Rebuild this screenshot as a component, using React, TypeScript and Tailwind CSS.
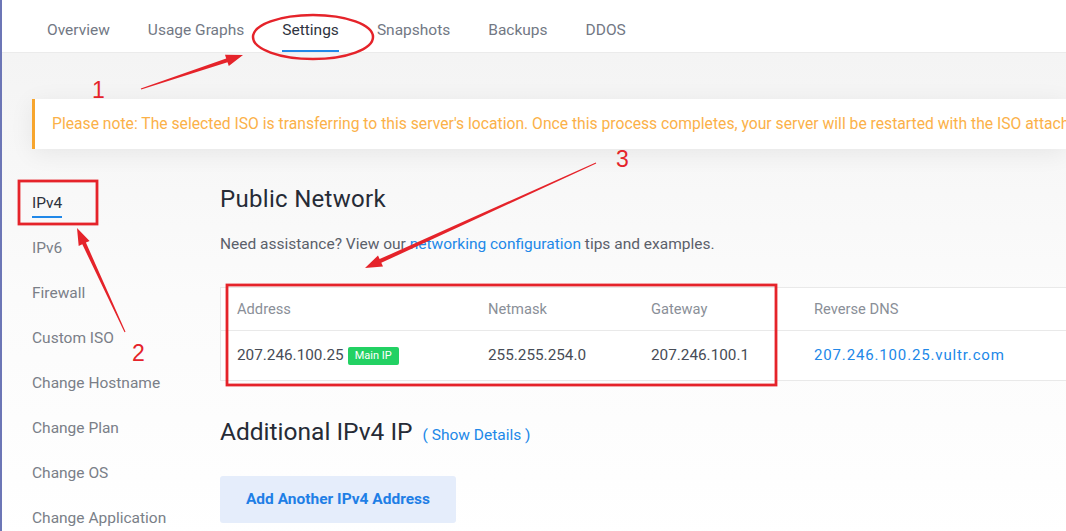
import React from "react";

type P = [number, number];

function arrowPoints(tail: P, tip: P, head = 17, hw = 6, w0 = 0.6, w1 = 2): string {
  const dx = tip[0] - tail[0];
  const dy = tip[1] - tail[1];
  const len = Math.hypot(dx, dy);
  const ux = dx / len;
  const uy = dy / len;
  const nx = -uy;
  const ny = ux;
  const bx = tip[0] - head * ux;
  const by = tip[1] - head * uy;
  const pts: P[] = [
    [tail[0] + w0 * nx, tail[1] + w0 * ny],
    [bx + w1 * nx, by + w1 * ny],
    [bx + hw * nx, by + hw * ny],
    tip,
    [bx - hw * nx, by - hw * ny],
    [bx - w1 * nx, by - w1 * ny],
    [tail[0] - w0 * nx, tail[1] - w0 * ny],
  ];
  return pts.map((p) => `${p[0].toFixed(1)},${p[1].toFixed(1)}`).join(" ");
}

const tabs = ["Overview", "Usage Graphs", "Settings", "Snapshots", "Backups", "DDOS"];
const side = [
  "IPv4",
  "IPv6",
  "Firewall",
  "Custom ISO",
  "Change Hostname",
  "Change Plan",
  "Change OS",
  "Change Application",
];

export default function App() {
  const red = "#e5232a";
  return (
    <div className="relative w-[1066px] h-[531px] overflow-hidden bg-white border-l-2 border-[#6c76b6] font-[Roboto,'Liberation_Sans',sans-serif]">
      {/* top nav */}
      <div className="h-[53px] bg-white border-b border-[#ebebeb] flex items-stretch pl-[45px] gap-[38px]">
        {tabs.map((t) => (
          <div
            key={t}
            className={
              t === "Settings"
                ? "flex items-center pt-[11px] border-b-2 border-[#2188e8] text-[15.5px] text-[#2f3440]"
                : "flex items-center pt-[11px] border-b-2 border-transparent text-[15.5px] text-[#727884]"
            }
          >
            {t}
          </div>
        ))}
      </div>

      {/* body */}
      <div className="bg-gradient-to-b from-[#f4f4f4] via-[#fbfbfb] to-white pt-[46px]">
        <div className="ml-[30px] h-[50px] bg-white border-l-[3px] border-[#f7a52d] shadow-[0_4px_24px_rgba(0,0,0,0.07)] pl-[17px] flex items-center whitespace-nowrap overflow-hidden text-[15.7px] text-[#fbb149]">
          Please note: The selected ISO is transferring to this server's location. Once this process completes, your server will be restarted with the ISO attached.
        </div>

        <div className="flex">
          {/* sidebar */}
          <div className="w-[218px] shrink-0 pl-[30px] pt-[31px] flex flex-col">
            {side.map((s, i) => (
              <div key={s} className="h-[45px] flex items-center">
                <span
                  className={
                    i === 0
                      ? "relative leading-[18px] text-[15.5px] text-[#2c313b]"
                      : "relative leading-[18px] text-[15.5px] text-[#7a7f88]"
                  }
                >
                  {s}
                  {i === 0 && <span className="absolute left-0 right-0 top-[22px] h-[2px] bg-[#2188e8]" />}
                </span>
              </div>
            ))}
          </div>

          {/* main */}
          <div className="flex-1 flex flex-col">
            <h2 className="mt-[36px] h-[28px] leading-[28px] text-[24px] tracking-[0.3px] text-[#262b36]">Public Network</h2>
            <p className="mt-[21px] leading-[20px] text-[15.5px] text-[#5b606a]">
              Need assistance? View our <span className="text-[#2188e8]">networking configuration</span> tips and
              examples.
            </p>

            <div className="mt-[33px] w-[900px] border border-[#e9e9e9] bg-white">
              <div className="grid grid-cols-[251px_163px_163px_1fr] pl-[16px] h-[43px] items-center border-b border-[#e9e9e9] text-[14.7px] text-[#8a8f98]">
                <div>Address</div>
                <div>Netmask</div>
                <div>Gateway</div>
                <div>Reverse DNS</div>
              </div>
              <div className="grid grid-cols-[251px_163px_163px_1fr] pl-[16px] h-[49px] items-center text-[15.3px] text-[#474c56]">
                <div className="flex items-center">
                  <span>207.246.100.25</span>
                  <span className="ml-[4px] h-[18px] px-[7px] rounded-[2px] bg-[#22d163] text-white text-[11px] leading-[18px]">
                    Main IP
                  </span>
                </div>
                <div>255.255.254.0</div>
                <div>207.246.100.1</div>
                <div className="text-[#2188e8] text-[15px] tracking-[0.85px]">207.246.100.25.vultr.com</div>
              </div>
            </div>

            <div className="mt-[37px] h-[28px] flex items-baseline">
              <span className="leading-[28px] text-[24.5px] text-[#262b36]">Additional IPv4 IP</span>
              <span className="ml-[10px] text-[15.5px] text-[#2188e8]">( Show Details )</span>
            </div>

            <button className="mt-[30px] w-[236px] h-[47px] rounded-[3px] bg-[#e5edfb] text-[#1f7fe6] font-bold text-[15.5px] flex items-center justify-center">
              Add Another IPv4 Address
            </button>
          </div>
        </div>
      </div>

      {/* annotations */}
      <svg className="absolute left-[-2px] top-0 pointer-events-none" width="1066" height="531" viewBox="0 0 1066 531">
        <ellipse cx="313" cy="37" rx="60" ry="22" fill="none" stroke={red} strokeWidth="2.5" />
        <polygon points={arrowPoints([141, 89], [243, 55])} fill={red} />
        <text x="92" y="98" fill={red} fontSize="23" fontFamily="'Liberation Sans', sans-serif">1</text>

        <rect x="19" y="181" width="78" height="43" fill="none" stroke={red} strokeWidth="2.8" />
        <polygon points={arrowPoints([125, 332], [77, 228])} fill={red} />
        <text x="132" y="361" fill={red} fontSize="23" fontFamily="'Liberation Sans', sans-serif">2</text>

        <polygon points={arrowPoints([596, 163], [365, 268])} fill={red} />
        <text x="616" y="167" fill={red} fontSize="23" fontFamily="'Liberation Sans', sans-serif">3</text>
        <rect x="227" y="285" width="549" height="100" fill="none" stroke={red} strokeWidth="2.8" />
      </svg>
    </div>
  );
}
